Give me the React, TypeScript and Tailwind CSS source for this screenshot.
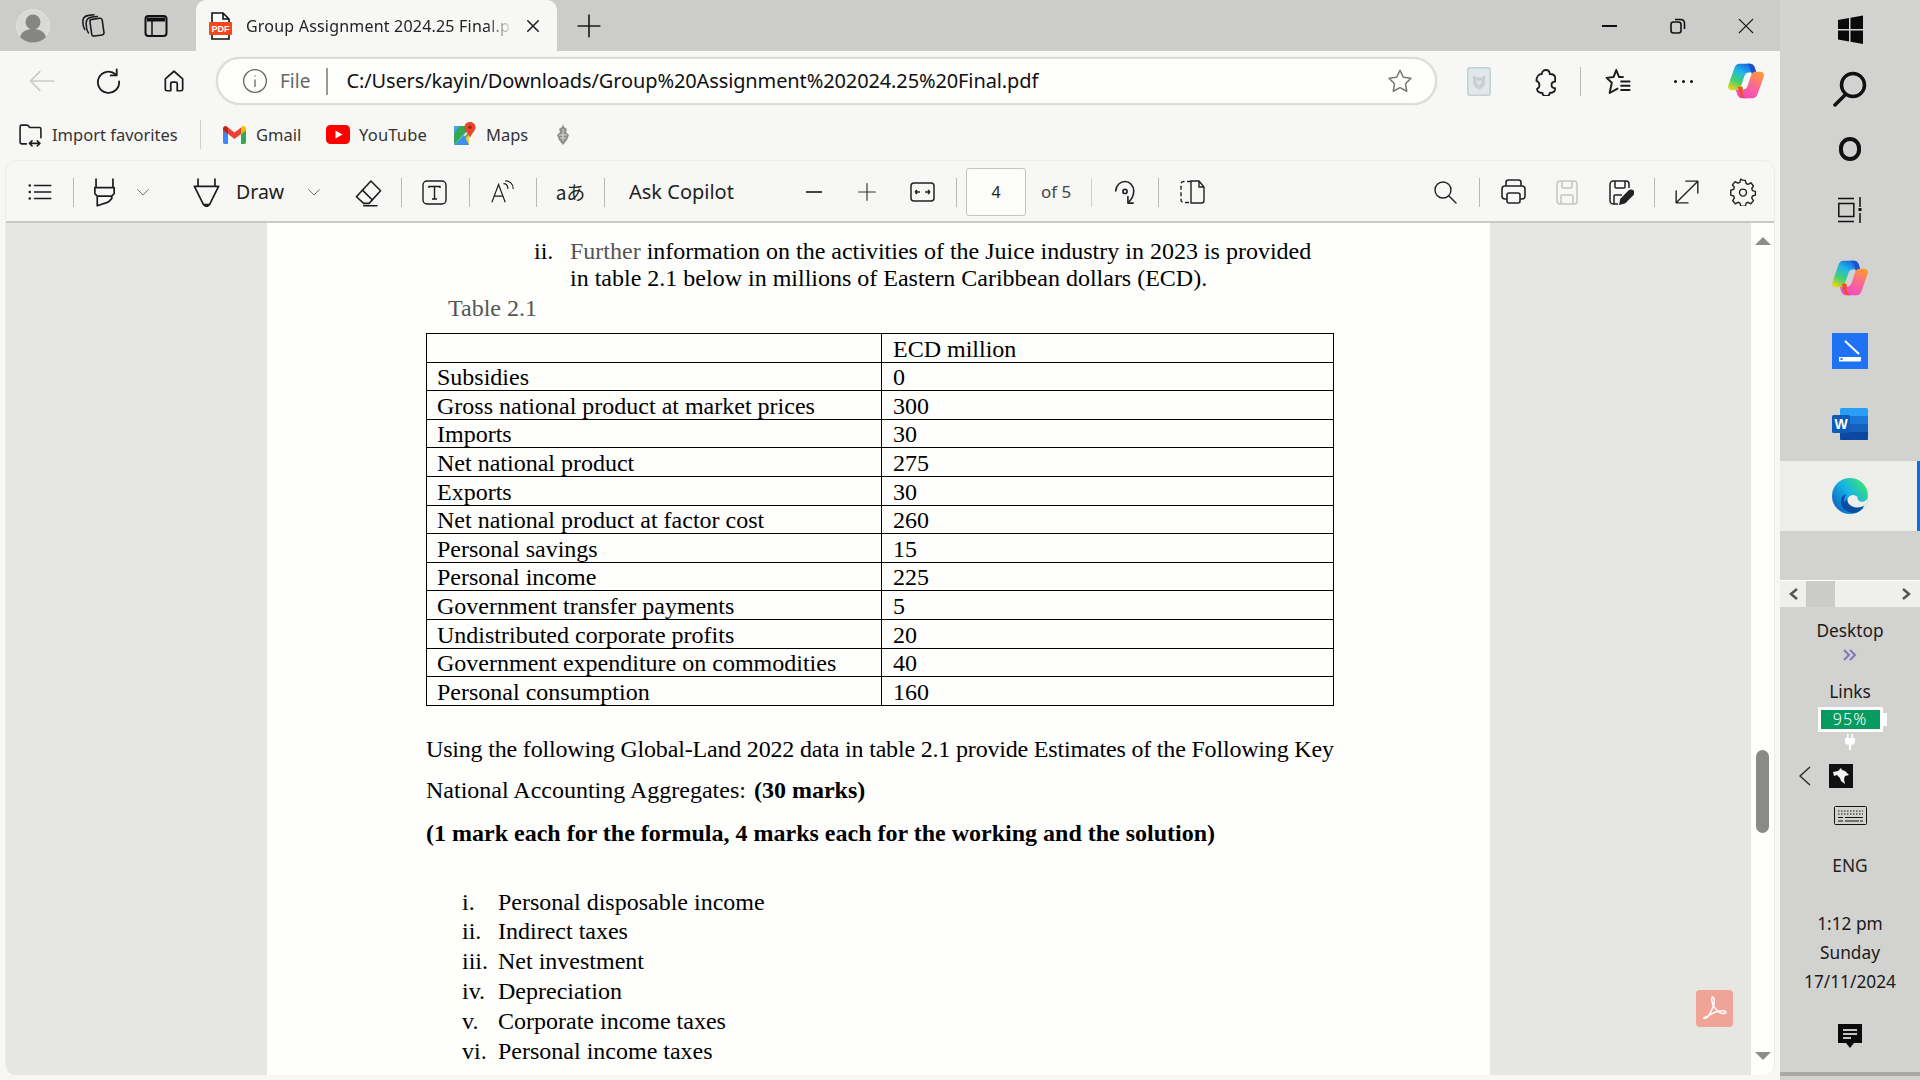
import type { ReactNode } from "react";
import clsx from "clsx";

const ui = "font-['Noto_Sans','Open_Sans',sans-serif]";

function Slot({ className, children }: { className?: string; children?: ReactNode }) {
  return <div className={clsx("flex shrink-0 items-center justify-center", className)}>{children}</div>;
}

function Sep({ className }: { className?: string }) {
  return <div className={clsx("h-[29px] w-px shrink-0 bg-[#b9b9b6]", className)} />;
}

function Ico({ size = 24, stroke = "#1c1c1c", sw = 1.5, children }: { size?: number; stroke?: string; sw?: number; children: ReactNode }) {
  return (
    <svg width={size} height={size} viewBox="0 0 24 24" fill="none" stroke={stroke} strokeWidth={sw} strokeLinecap="round" strokeLinejoin="round">
      {children}
    </svg>
  );
}

function CopilotLogo({ size, id }: { size: number; id: string }) {
  return (
    <svg width={size} height={size} viewBox="1 1.500 22 22">
      <defs>
        <linearGradient id={id + "a"} x1="0.75" y1="0" x2="0.2" y2="1">
          <stop offset="0" stopColor="#1a5fe0" />
          <stop offset="0.35" stopColor="#22b5e8" />
          <stop offset="0.7" stopColor="#45d16c" />
          <stop offset="1" stopColor="#e8d51e" />
        </linearGradient>
        <linearGradient id={id + "b"} x1="0.75" y1="0" x2="0.2" y2="1">
          <stop offset="0" stopColor="#f048c8" />
          <stop offset="0.55" stopColor="#fb6a90" />
          <stop offset="1" stopColor="#ff9a2e" />
        </linearGradient>
      </defs>
      <path d="M8 2h6.5c1.4 0 2.2.8 2.7 2l1 3-4.5.3c-1.4.1-2.2.9-2.7 2.3l-2.4 7c-.4 1.1-1.2 1.6-2.3 1.6H3.2C1.7 18.2.7 16.9 1.1 15.4L4.9 4.6C5.4 3 6.4 2 8 2z" fill={`url(#${id}a)`} />
      <path d="M14.2 4c-.6-1.4-1-2-2.4-2h2.6c1.4 0 2.3.8 2.8 2l1.6 5h-3z" fill="#1d4fd0" />
      <path d="M8 2h6.5c1.4 0 2.2.8 2.7 2l1 3-4.5.3c-1.4.1-2.2.9-2.7 2.3l-2.4 7c-.4 1.1-1.2 1.6-2.3 1.6H3.2C1.7 18.2.7 16.9 1.1 15.4L4.9 4.6C5.4 3 6.4 2 8 2z" fill={`url(#${id}b)`} transform="rotate(180 12 12.5)" />
      <path d="M9.8 20c.6 1.5 1.2 3 2.6 3h-1.4c-1.4 0-2.2-1-2.7-2.4L7 16h3z" fill="#f0501e" />
    </svg>
  );
}

function EdgeLogo() {
  return (
    <svg width="36" height="36" viewBox="0 0 36 36">
      <defs>
        <linearGradient id="edgeA" x1="0.1" y1="0.9" x2="0.95" y2="0.25">
          <stop offset="0" stopColor="#0c62c4" />
          <stop offset="0.55" stopColor="#16b4e6" />
          <stop offset="1" stopColor="#36e07c" />
        </linearGradient>
      </defs>
      <circle cx="18" cy="18" r="18" fill="url(#edgeA)" />
      <path d="M36 19c-1 3.500-4.500 5.500-7.500 4.500-2.500-.8-3.500-3-3-5-1 .5-2-1.500-4.500-1.500-3 0-6 2.500-5.500 6.500.5 4 4.500 7.500 9.500 7.500 4 0 6-1 8-2.500l2.500-5.500z" fill="#ededea" />
      <path d="M14 16c-3 1-5.500 4-5 9 .6 5 5 9 9.500 9.500 4 .4 7-1 9-3-4 1.500-8.500 1-11.500-1.500-3-2.500-4.500-5.500-4-8 .3-2 1-4 2-6z" fill="#0a4da3" />
      <path d="M15 21c0 4 4 8.500 10 8.500 3 0 5.500-.8 7-2-1.500 4-5 7-10 7.500-4.500-.5-8-3-9.500-7-1-3 .5-5.500 2.500-7z" fill="#0a4da3" />
    </svg>
  );
}

function TabStrip() {
  return (
    <div className="flex h-[51px] shrink-0 items-end bg-[#cccccb]">
      <Slot className="h-[51px] w-[66px]">
        <svg width="34" height="34" viewBox="0 0 34 34">
          <circle cx="17" cy="17" r="16.500" fill="#d9d9d6" stroke="#e2e2de" />
          <circle cx="17" cy="13" r="7.500" fill="#858582" />
          <path d="M4 28c2-6 7-8 13-8s11 2 13 8c-3 3.500-8 5.500-13 5.500S7 31.500 4 28z" fill="#858582" />
        </svg>
      </Slot>
      <Slot className="h-[51px] w-[54px]">
        <Ico size={27} sw={1.4}>
          <rect x="9.500" y="6" width="11" height="15" rx="2" transform="rotate(-8 15 13)" />
          <path d="M7.500 18.500c-1.500-2-2-5-2-8.500 0-3 2-5 5-5.500l5-.5" />
          <path d="M4.200 15.500C3 13.500 2.500 11 2.500 8.500 2.500 5.500 4.500 3.500 7.500 3l5-.500" />
        </Ico>
      </Slot>
      <Slot className="h-[51px] w-[72px]">
        <svg width="24" height="24" viewBox="0 0 24 24">
          <rect x="1.500" y="2" width="21" height="20" rx="3" fill="none" stroke="#111" strokeWidth="2" />
          <path d="M3 3.500h18v4H3z" fill="#111" />
          <path d="M8 7v14" stroke="#111" strokeWidth="1.500" />
        </svg>
      </Slot>
      <div className="ml-[4px] flex h-[51px] w-[361px] shrink-0 items-center rounded-t-[10px] bg-[#f7f8f6] pl-[13px]">
        <svg width="23" height="30" viewBox="0 0 23 30" className="shrink-0">
          <path d="M3 11V2h11l6 6v3M3 23v5h17v-5M14 2v6h6" fill="#fff" stroke="#111" strokeWidth="1.600" />
          <rect x="0" y="11" width="23" height="13" rx="1" fill="#f4471c" />
          <text x="11.500" y="21" fontSize="9" fontWeight="700" fill="#fff" textAnchor="middle" fontFamily="Liberation Sans, sans-serif">PDF</text>
        </svg>
        <span className="ml-[14px] w-[267px] whitespace-nowrap text-[16px] leading-[20px] tracking-[0.2px] text-[#222] [mask-image:linear-gradient(to_right,black_90%,transparent)]">
          Group Assignment 2024.25 Final.p
        </span>
        <Slot className="ml-[4px] w-[32px]">
          <Ico size={18} sw={2}><path d="M5 5l14 14M19 5L5 19" /></Ico>
        </Slot>
      </div>
      <Slot className="h-[51px] w-[64px]">
        <Ico size={26} sw={1.5}><path d="M12 2v20M2 12h20" /></Ico>
      </Slot>
      <div className="flex-1" />
      <Slot className="h-[51px] w-[68px]"><div className="h-[2px] w-[15px] bg-[#111]" /></Slot>
      <Slot className="ml-px h-[51px] w-[68px]">
        <svg width="16" height="16" viewBox="0 0 16 16" fill="none" stroke="#111" strokeWidth="1.600">
          <rect x="1" y="4" width="10" height="11" rx="2.500" />
          <path d="M5 1.500h5.500c2.500 0 4 1.500 4 4V11" />
        </svg>
      </Slot>
      <Slot className="ml-px mr-px h-[51px] w-[66px]">
        <Ico size={20} stroke="#111" sw={1.500}><path d="M4 4l16 16M20 4L4 20" /></Ico>
      </Slot>
    </div>
  );
}

function AddressBar() {
  return (
    <div className="flex h-[60px] shrink-0 items-center pl-[8px]">
      <Slot className="w-[66px]">
        <Ico size={28} stroke="#c8cac7" sw={1.4}><path d="M3 12h20M11 4l-8 8 8 8" /></Ico>
      </Slot>
      <Slot className="ml-px w-[66px]">
        <Ico size={29} sw={1.500}>
          <path d="M18 6.200A8.800 8.800 0 1 0 20.800 12" />
          <path d="M18.800 2v5h-5" />
        </Ico>
      </Slot>
      <Slot className="w-[66px]">
        <Ico size={26} sw={1.6}>
          <path d="M4 10l8-7 8 7v9.500c0 1-.8 1.500-1.500 1.500H15v-6.500c0-1-.7-1.500-1.500-1.500h-3c-.8 0-1.500.5-1.500 1.500V21H5.500C4.800 21 4 20.500 4 19.500z" />
        </Ico>
      </Slot>
      <div className="ml-[9px] flex h-[48px] w-[1221px] shrink-0 items-center rounded-full border-2 border-[#dcdeda] bg-[#fefefc] pl-[24px] shadow-[0_0_1px_#c8c8c4]">
        <Ico size={26} stroke="#666" sw={1.200}>
          <circle cx="12" cy="12" r="10.500" />
          <path d="M12 11v6M12 7.200v.2" />
        </Ico>
        <span className="ml-[12px] text-[19px] leading-[24px] text-[#666]">File</span>
        <div className="ml-[16px] h-[27px] w-[2px] bg-[#999]" />
        <span className="ml-[18px] whitespace-nowrap text-[20px] leading-[26px] tracking-[-0.12px] text-[#111]">C:/Users/kayin/Downloads/Group%20Assignment%202024.25%20Final.pdf</span>
        <div className="flex-1" />
        <Slot className="mr-[20px] w-[30px]">
          <Ico size={28} stroke="#777" sw={1.300}><path d="M12 2.800l2.900 6 6.500.9-4.700 4.600 1.100 6.500-5.800-3.100-5.800 3.100 1.100-6.500-4.700-4.600 6.500-.9z" /></Ico>
        </Slot>
      </div>
      <Slot className="ml-[9px] w-[66px]">
        <svg width="24" height="29" viewBox="0 0 24 29">
          <rect x="0.800" y="0.800" width="22.400" height="27.400" rx="2" fill="#e2e7e9" stroke="#c3cfd6" strokeWidth="1.500" />
          <path d="M6 8l3.500 2.500h5L18 8v8c0 3-2.500 5-6 6.500-3.500-1.500-6-3.500-6-6.500z" fill="#c6cfd3" />
          <path d="M9.500 12.500v4l2.500 2 2.500-2v-4l-2.500 1.500z" fill="#dbe1e4" />
        </svg>
      </Slot>
      <Slot className="w-[67px]">
        <Ico size={29} sw={1.500}>
          <path d="M9 5.800c0-2 1.500-3.300 3.300-3.300s3.200 1.300 3.200 3.300c3 0 4.500 1 4.500 3.200v3c-2 .2-3 1.300-3 2.800s1 2.600 3 2.800c0 2.700-2 3.900-4.500 3.900 0 1.500-1.300 2.500-3 2.500s-3-1-3-2.500c-3 0-4.500-1.300-4.500-3.400.8-.5 2-1 2-2.800S6 12 4.500 11.500C4.500 8 6.500 5.800 9 5.800z" />
        </Ico>
      </Slot>
      <Sep className="ml-px" />
      <Slot className="w-[72px]">
        <Ico size={29} sw={1.600}>
          <path d="M11 2.500l2.300 5.800h3.200M11 2.500L8.700 8.300 3 9l4.300 4-1.800 8.500 6.500-3.600" />
          <path d="M15 12h7M15 15.500h7M15 19h7" />
        </Ico>
      </Slot>
      <Slot className="w-[60px]">
        <div className="flex gap-[5px]">
          <div className="h-[3px] w-[3px] rounded-full bg-[#111]" />
          <div className="h-[3px] w-[3px] rounded-full bg-[#111]" />
          <div className="h-[3px] w-[3px] rounded-full bg-[#111]" />
        </div>
      </Slot>
      <Slot className="w-[66px]"><CopilotLogo size={36} id="cp1" /></Slot>
    </div>
  );
}

function Favorites() {
  return (
    <div className="flex h-[49px] shrink-0 items-center pb-[2px] pl-[18px] text-[16.500px] leading-[22px] text-[#333]">
      <Ico size={25} sw={1.500}>
        <path d="M8 21H3.500C2.500 21 2 20.300 2 19.500V4.500C2 3.500 2.500 3 3.500 3h5c1 0 1.500.5 2 1.300l.5 1h9.500c1 0 1.500.7 1.500 1.500V15" />
        <path d="M11 20.500h10M13.500 18l-2.500 2.500 2.500 2.500M18.500 18l2.500 2.500-2.500 2.500" />
      </Ico>
      <span className="ml-[9px] w-[126px] whitespace-nowrap">Import favorites</span>
      <div className="ml-[22px] h-[29px] w-px bg-[#cfd0cd]" />
      <div className="ml-[22px] flex w-[103px] items-center">
        <svg width="23" height="18" viewBox="0 0 23 18">
          <path d="M0 3v13c0 1 .7 2 1.700 2H5V8z" fill="#4285f4" />
          <path d="M23 3v13c0 1-.7 2-1.700 2H18V8z" fill="#34a853" />
          <path d="M18 1.500V8l5-3.500V2.500C23 .5 20.700-.7 19 .6z" fill="#fbbc04" />
          <path d="M5 8L0 4.500V2.500C0 .5 2.300-.7 4 .6l1 .9z" fill="#c5221f" />
          <path d="M5 1.500L11.500 6.500 18 1.500V8l-6.500 5L5 8z" fill="#ea4335" />
        </svg>
        <span className="ml-[10px]">Gmail</span>
      </div>
      <div className="flex w-[127px] items-center">
        <svg width="24" height="19" viewBox="0 0 24 19">
          <rect width="24" height="19" rx="4.500" fill="#ff0000" />
          <path d="M9.500 5.500v8l7-4z" fill="#fff" />
        </svg>
        <span className="ml-[9px] tracking-[0.2px]">YouTube</span>
      </div>
      <div className="flex w-[102px] items-center">
        <svg width="23" height="26" viewBox="0 0 23 26">
          <path d="M1 4h15v19H1z" fill="#35a853" />
          <path d="M1 4h6l-6 7z" fill="#4fa0e8" />
          <path d="M7 23l9-11v11z" fill="#f9c633" />
          <path d="M1 23l15-16v3L4 23z" fill="#e6e6e6" />
          <path d="M1 23l10-10 5 10z" fill="#3b8ff0" />
          <path d="M17 0c3.300 0 5.500 2.400 5.500 5.300 0 3.500-3.800 6-5.500 10.700-1.700-4.700-5.500-7.200-5.500-10.700C11.500 2.400 13.700 0 17 0z" fill="#e8452c" />
          <circle cx="17" cy="5.300" r="1.800" fill="#9c2414" />
        </svg>
        <span className="ml-[10px]">Maps</span>
      </div>
      <svg width="16" height="24" viewBox="0 0 16 24">
        <path d="M8 1l1 3 3 2-1 3 3 3-2 5-4 5-4-5-2-5 3-3-1-3 3-2z" fill="#8d8f8c" />
        <path d="M4 12h8M5 15h6M8 6v12" stroke="#dcdcda" strokeWidth="1" />
      </svg>
    </div>
  );
}

function PdfToolbar() {
  return (
    <div className="flex h-[62px] shrink-0 items-center border-b-2 border-[#c9c9c7] pt-[2px] text-[19.500px] leading-[26px] text-[#222]">
      <Slot className="w-[67px]">
        <Ico size={26} sw={1.500}>
          <path d="M7 6h15M7 12h15M7 18h15" />
          <path d="M2.500 6h.1M2.500 12h.1M2.500 18h.1" strokeWidth="2.200" />
        </Ico>
      </Slot>
      <Sep />
      <Slot className="w-[60px]">
        <Ico size={29} sw={1.400}>
          <path d="M5 1v7M19 1v7M4 8h16M4 8v5l2 2h12l2-2V8M6 15v8l9-3 3-3v-2" />
        </Ico>
      </Slot>
      <Slot className="ml-[2px] w-[14px]">
        <Ico size={14} stroke="#555" sw={1.500}><path d="M3 8l9 9 9-9" /></Ico>
      </Slot>
      <Slot className="ml-[36px] w-[40px]">
        <Ico size={29} sw={1.400}>
          <path d="M2 7h20M2 7l7.500 15h5L22 7M5 1v6M19 1v6M9.500 22l2.500 2 2.500-2" />
        </Ico>
      </Slot>
      <span className="ml-[10px] w-[47px] whitespace-nowrap">Draw</span>
      <Slot className="ml-[21px] w-[20px]">
        <Ico size={14} stroke="#555" sw={1.500}><path d="M3 8l9 9 9-9" /></Ico>
      </Slot>
      <Slot className="ml-[24px] w-[40px]">
        <Ico size={29} sw={1.300}>
          <path d="M14 2.500l8 8-9.500 10.500H8L2 15.500z" />
          <path d="M7 10l8 8M8 23h11" />
        </Ico>
      </Slot>
      <Sep className="ml-[13px]" />
      <Slot className="w-[64px]">
        <svg width="25" height="25" viewBox="0 0 25 25" fill="none" stroke="#1c1c1c" strokeWidth="1.400">
          <rect x="1" y="1" width="23" height="23" rx="4" />
          <path d="M7 8V6.500h11V8M12.500 6.500V19M10 19h5" />
        </svg>
      </Slot>
      <Sep className="ml-[3px]" />
      <Slot className="w-[66px]">
        <svg width="24" height="25" viewBox="0 0 27 26" fill="none" stroke="#1c1c1c" strokeWidth="1.300">
          <path d="M1 24L8.500 4 16 24M3.800 17h9.400" />
          <path d="M14 3c3 0 5 2 5 6M16 0c5 0 9 3 9 9" />
        </svg>
      </Slot>
      <Sep />
      <Slot className="w-[67px]">
        <span className="whitespace-nowrap font-['Noto_Sans_CJK_JP','Noto_Sans',sans-serif] text-[19px]">aあ</span>
      </Slot>
      <Sep />
      <span className="ml-[24px] w-[105px] whitespace-nowrap text-[20px]">Ask Copilot</span>
      <Slot className="ml-[60px] w-[40px]"><div className="h-[2px] w-[16px] bg-[#444]" /></Slot>
      <Slot className="ml-[13px] w-[40px]">
        <Ico size={20} stroke="#333" sw={1.400}><path d="M12 2v20M2 12h20" /></Ico>
      </Slot>
      <Slot className="ml-[15px] w-[40px]">
        <svg width="25" height="20" viewBox="0 0 25 20" fill="none" stroke="#222" strokeWidth="1.500">
          <rect x="1" y="1" width="23" height="18" rx="3" />
          <path d="M5 10h5M5 10l2-2M5 10l2 2M20 10h-5M20 10l-2-2M20 10l-2 2" />
        </svg>
      </Slot>
      <Sep className="ml-[14px]" />
      <div className="ml-[9px] flex h-[48px] w-[60px] shrink-0 items-center justify-center rounded-[3px] border border-[#c4c4c2] bg-[#fcfcfb] text-[16px]">4</div>
      <span className="ml-[15px] w-[50px] whitespace-nowrap text-[17px] text-[#444]">of 5</span>
      <Sep className="bg-[#d0d0ce]" />
      <Slot className="w-[66px]">
        <Ico size={28} stroke="#222" sw={1.400}>
          <path d="M4 11c.5-5 4-8 8-8s7.500 3.500 7.500 8c0 3-1.500 7-4.500 10" />
          <path d="M14.500 16v5.500H19" />
          <circle cx="12" cy="11.500" r="1.800" />
        </Ico>
      </Slot>
      <Sep />
      <Slot className="w-[66px]">
        <svg width="25" height="24" viewBox="0 0 25 24" fill="none" stroke="#222" strokeWidth="1.400">
          <path d="M11 1.500H4C2.500 1.500 1 2.500 1 4v16c0 1.500 1.500 2.500 3 2.500h7" strokeDasharray="4 2.500" />
          <path d="M11 1h8l5 6v13.500c0 1.500-1 2.500-2.500 2.500H11zM19 1v6h5" />
        </svg>
      </Slot>
      <div className="flex-1" />
      <Slot className="mr-[2px] w-[64px]">
        <Ico size={24} stroke="#222" sw={1.400}><circle cx="10" cy="10" r="8" /><path d="M16 16l7 7" /></Ico>
      </Slot>
      <Sep />
      <Slot className="w-[66px]">
        <svg width="25" height="26" viewBox="0 0 25 26" fill="none" stroke="#222" strokeWidth="1.600">
          <path d="M5 7V3.500C5 2 6 1 7.500 1h10C19 1 20 2 20 3.500V7" />
          <rect x="1" y="7" width="23" height="13" rx="3" />
          <rect x="6" y="14" width="13" height="10" rx="2" fill="#f7f8f6" />
        </svg>
      </Slot>
      <Slot className="w-[42px]">
        <svg width="22" height="25" viewBox="0 0 22 25" fill="none" stroke="#c5c5c3" strokeWidth="1.500">
          <rect x="1" y="1" width="20" height="23" rx="3" />
          <path d="M6 1v6c0 .5.5 1 1 1h8c.5 0 1-.5 1-1V1M5 24v-8c0-.5.5-1 1-1h10c.5 0 1 .5 1 1v8" />
        </svg>
      </Slot>
      <Slot className="w-[66px]">
        <svg width="25" height="25" viewBox="0 0 25 25" fill="none" stroke="#222" strokeWidth="1.500">
          <path d="M9 24H4c-1.500 0-3-1.500-3-3V4c0-1.500 1.500-3 3-3h13c2 0 3 1.500 3 3v4" />
          <path d="M6 1v6c0 .5.5 1 1 1h8c.5 0 1-.5 1-1V1M5 24v-8c0-.5.5-1 1-1h7" />
          <path d="M11 24l1-5 8-8c1-1 3-1 4 0s1 2.500 0 3.500l-8 8z" fill="#222" />
        </svg>
      </Slot>
      <Sep />
      <Slot className="w-[64px]">
        <Ico size={26} stroke="#222" sw={1.300}><path d="M2 22L22 2M11 2h11v11M2 11v11h11" /></Ico>
      </Slot>
      <Slot className="ml-[3px] w-[42px]">
        <Ico size={28} stroke="#222" sw={1.200}>
          <path d="M12 1.800l2 .3.700 2.600 1.700.7 2.300-1.300 2.300 2.700-1.500 2.200.6 1.800 2.500.7v3.200l-2.500.7-.6 1.800 1.500 2.200-2.300 2.700-2.300-1.300-1.700.7-.7 2.600h-3.900l-.7-2.600-1.700-.7-2.300 1.300-2.300-2.700 1.500-2.200-.6-1.800-2.500-.7V10.500l2.500-.7.600-1.800L3 5.800l2.300-2.700 2.300 1.300 1.700-.7.700-2.600z" />
          <circle cx="12" cy="12.500" r="3" />
        </Ico>
      </Slot>
      <div className="w-[10px]" />
    </div>
  );
}

const rows = [
  ["", "ECD million"],
  ["Subsidies", "0"],
  ["Gross national product at market prices", "300"],
  ["Imports", "30"],
  ["Net national product", "275"],
  ["Exports", "30"],
  ["Net national product at factor cost", "260"],
  ["Personal savings", "15"],
  ["Personal income", "225"],
  ["Government transfer payments", "5"],
  ["Undistributed corporate profits", "20"],
  ["Government expenditure on commodities", "40"],
  ["Personal consumption", "160"],
];

const answers = [
  ["i.", "Personal disposable income"],
  ["ii.", "Indirect taxes"],
  ["iii.", "Net investment"],
  ["iv.", "Depreciation"],
  ["v.", "Corporate income taxes"],
  ["vi.", "Personal income taxes"],
];

function PdfPage() {
  return (
    <div className="h-full w-[1223px] shrink-0 overflow-hidden bg-[#fefefc] pl-[159px] pt-[15px] font-['Liberation_Serif',serif] text-[24px] text-black">
      <div className="flex pl-[108px] leading-[27px]">
        <span className="w-[36px]">ii.</span>
        <p className="whitespace-nowrap">
          <span className="text-[#555]">Further </span>information on the activities of the Juice industry in 2023 is provided
          <br />
          in table 2.1 below in millions of Eastern Caribbean dollars (ECD).
        </p>
      </div>
      <p className="mt-[2px] pl-[22px] leading-[28px] text-[#555]">Table 2.1</p>
      <table className="mt-[11px] w-[908px] table-fixed border-collapse border border-black">
        <tbody>
          {rows.map((r, i) => (
            <tr key={i} className="h-[28.600px]">
              <td className="w-[455px] overflow-hidden border border-black pl-[10px] align-bottom leading-[25px] whitespace-nowrap">{r[0]}</td>
              <td className="overflow-hidden border border-black pl-[11px] align-bottom leading-[25px] whitespace-nowrap">{r[1]}</td>
            </tr>
          ))}
        </tbody>
      </table>
      <p className="mt-[29px] whitespace-nowrap leading-[28px] tracking-[-0.18px]">Using the following Global-Land 2022 data in table 2.1 provide Estimates of the Following Key</p>
      <p className="mt-[13px] whitespace-nowrap leading-[28px]">National Accounting Aggregates: <b className="ml-[2px]">(30 marks)</b></p>
      <p className="mt-[15px] whitespace-nowrap font-bold leading-[28px]">(1 mark each for the formula, 4 marks each for the working and the solution)</p>
      <ul className="mt-[40px] pl-[36px]">
        {answers.map((a) => (
          <li key={a[0]} className="flex h-[29.800px] items-center">
            <span className="w-[36px]">{a[0]}</span>
            <span>{a[1]}</span>
          </li>
        ))}
      </ul>
    </div>
  );
}

function PdfScrollbar() {
  return (
    <div className="flex h-full w-[23px] shrink-0 flex-col items-center bg-[#fefefc]">
      <div className="mt-[14px] h-0 w-0 border-x-[8px] border-b-[8px] border-x-transparent border-b-[#8c8c8a]" />
      <div className="mt-[505px] h-[83px] w-[13px] rounded-full bg-[#8a8a88]" />
      <div className="mt-[219px] h-0 w-0 border-x-[8px] border-t-[8px] border-x-transparent border-t-[#8c8c8a]" />
    </div>
  );
}

function Taskbar() {
  return (
    <div className="flex h-[1080px] w-[140px] shrink-0 flex-col items-center bg-[#d2d2d0] text-[17.300px] leading-[24px] text-[#1a1a1a]">
      <Slot className="h-[60px]">
        <svg width="25" height="30" viewBox="0 0 25 30" fill="#0a0a0a">
          <path d="M0 5l11-2v11H0zM12.500 2.700L25 .5V14H12.500zM0 15.500h11v11l-11-2zM12.500 15.500H25V29l-12.500-2.200z" />
        </svg>
      </Slot>
      <Slot className="h-[58px]">
        <svg width="34" height="36" viewBox="0 0 34 36" fill="none" stroke="#111" strokeWidth="3.500" strokeLinecap="round">
          <circle cx="20" cy="14" r="11.500" />
          <path d="M12 24L2 34" />
        </svg>
      </Slot>
      <Slot className="h-[62px]">
        <div className="h-[24px] w-[22px] rounded-full border-[4px] border-[#111]" />
      </Slot>
      <Slot className="h-[60px]">
        <svg width="24" height="26" viewBox="0 0 24 26" fill="none" stroke="#111" strokeWidth="1.500">
          <path d="M0 1.500h16M0 24.500h16" />
          <rect x="0.800" y="6.500" width="15" height="13" />
          <path d="M22 0v10M22 16v10" />
          <rect x="20.500" y="11" width="3" height="3" fill="#111" stroke="none" />
        </svg>
      </Slot>
      <Slot className="h-[76px]"><CopilotLogo size={36} id="cp2" /></Slot>
      <Slot className="h-[70px]">
        <svg width="36" height="36" viewBox="0 0 36 36">
          <rect width="36" height="36" fill="#1f73f2" />
          <path d="M13 8l14 13" stroke="#fff" strokeWidth="2" />
          <path d="M7 24h22v3.500c0 .8-.5 1-1 1H7z" fill="#fff" />
          <rect x="8.500" y="25" width="2" height="2" fill="#1f73f2" />
        </svg>
      </Slot>
      <Slot className="h-[75px]">
        <svg width="36" height="32" viewBox="0 0 36 32">
          <rect x="8" y="0" width="28" height="32" rx="1.500" fill="#2a9df4" />
          <rect x="8" y="8" width="28" height="8" fill="#1b78d6" />
          <rect x="8" y="16" width="28" height="8" fill="#1560bd" />
          <path d="M8 24h28v6.500c0 1-.5 1.500-1.500 1.500h-25C8.500 32 8 31.500 8 30.500z" fill="#0d47a1" />
          <rect x="0" y="7" width="18" height="18" rx="1.500" fill="#0f5bb8" />
          <text x="9" y="21" fontSize="14" fontWeight="700" fill="#fff" textAnchor="middle" fontFamily="Liberation Sans, sans-serif">W</text>
        </svg>
      </Slot>
      <div className="flex h-[70px] w-[140px] shrink-0 items-center justify-center border-r-[3px] border-[#0a6fe0] bg-[#ededea] pl-[3px]">
        <EdgeLogo />
      </div>
      <div className="mt-[49px] flex h-[27px] w-[140px] shrink-0 items-center border-t border-[#fff] bg-[#eff0ee]">
        <Slot className="w-[26px]">
          <svg width="11" height="12" viewBox="0 0 11 12" fill="none" stroke="#555" strokeWidth="2.500"><path d="M9 1L3 6l6 5" /></svg>
        </Slot>
        <div className="h-[26px] w-[29px] bg-[#cbcbc9]" />
        <div className="flex-1" />
        <Slot className="w-[28px]">
          <svg width="11" height="12" viewBox="0 0 11 12" fill="none" stroke="#555" strokeWidth="2.500"><path d="M2 1l6 5-6 5" /></svg>
        </Slot>
      </div>
      <span className="mt-[12px]">Desktop</span>
      <Slot className="h-[24px]">
        <svg width="14" height="12" viewBox="0 0 14 12" fill="none" stroke="#7d78b4" strokeWidth="2"><path d="M1 1l5 5-5 5M7 1l5 5-5 5" /></svg>
      </Slot>
      <span className="mt-[13px]">Links</span>
      <div className="relative mt-[3px] flex h-[25px] w-[65px] shrink-0 items-center justify-center border-[3px] border-white bg-[#079b62] text-[16px] font-light leading-[19px] tracking-[1px] text-white">
        95%
        <div className="absolute right-[-7px] top-[3px] h-[13px] w-[4px] bg-white" />
      </div>
      <Slot className="h-[20px]">
        <svg width="10" height="16" viewBox="0 0 10 16" fill="#fff">
          <path d="M2 0h1.500v4H6.500V0H8v4h2v4c0 1.500-1.500 3-4 3v5H4v-5c-2.500 0-4-1.500-4-3V4h2z" />
        </svg>
      </Slot>
      <div className="mt-[12px] flex w-[102px] items-center">
        <svg width="12" height="20" viewBox="0 0 12 20" fill="none" stroke="#222" strokeWidth="1.300"><path d="M11 1L1 10l10 9" /></svg>
        <div className="ml-[18px] flex h-[24px] w-[24px] items-center justify-center bg-[#111]">
          <svg width="18" height="18" viewBox="0 0 18 18" fill="#f4f4f4">
            <path d="M1 5l5-1 3-3 1 2 3 1 4 4-4 1-1 3 1 5-4-3-1-3-3-3-3 1z" />
          </svg>
        </div>
      </div>
      <svg width="33" height="19" viewBox="0 0 33 19" fill="none" stroke="#111" className="mt-[18px] shrink-0">
        <rect x="0.500" y="0.500" width="32" height="18" rx="1" />
        <path d="M4 5h25M4 8h25" strokeDasharray="1.500 1.500" />
        <path d="M4 11.500h5M11 11.500h18M4 15h5M11 15h14M26 15h3" />
      </svg>
      <span className="mt-[29px] text-[#222]">ENG</span>
      <span className="mt-[34px]">1:12 pm</span>
      <span className="mt-[5px]">Sunday</span>
      <span className="mt-[5px]">17/11/2024</span>
      <svg width="24" height="24" viewBox="0 0 24 24" className="mt-[30px] shrink-0">
        <path d="M0 0h24v19h-8l-4 5-4-5H0z" fill="#0a0a0a" />
        <path d="M5 6h14M5 10h14M5 14h8" stroke="#fff" strokeWidth="1.300" />
      </svg>
      <div className="mt-auto mb-[4px] h-[4px] w-[140px] shrink-0 bg-[#a9a9a7]" />
    </div>
  );
}

export default function App() {
  return (
    <div className={clsx("flex h-[1080px] w-[1920px] overflow-hidden", ui)}>
      <div className="flex h-[1080px] w-[1780px] shrink-0 flex-col bg-[#f7f8f6]">
        <TabStrip />
        <AddressBar />
        <Favorites />
        <div className="ml-[5px] flex h-[915px] w-[1770px] shrink-0 flex-col overflow-hidden rounded-t-[12px] rounded-b-[10px] border-x border-t border-[#ecedea]">
          <PdfToolbar />
          <div className="relative flex min-h-0 flex-1 bg-[#e6e7e3]">
            <div className="w-[261px] shrink-0" />
            <PdfPage />
            <div className="flex-1" />
            <PdfScrollbar />
            {/* floating acrobat button */}
            <div className="absolute bottom-[48px] right-[41px] flex h-[37px] w-[37px] items-center justify-center rounded-[4px] bg-[#f0a498]">
              <svg width="28" height="28" viewBox="0 0 28 28" fill="none" stroke="#fff" strokeWidth="1.500">
                <path d="M3 23c3 2 6-4 9-11 1.500-4 2-9 0-10-2-.5-1.500 4 0 8 2 4 6 8 9 8.500 3 .5 4.500-1 3.500-2-2-2-11 0-16 3.500-3 2-6 2-5.500 3.500z" />
              </svg>
            </div>
          </div>
        </div>
      </div>
      <Taskbar />
    </div>
  );
}
